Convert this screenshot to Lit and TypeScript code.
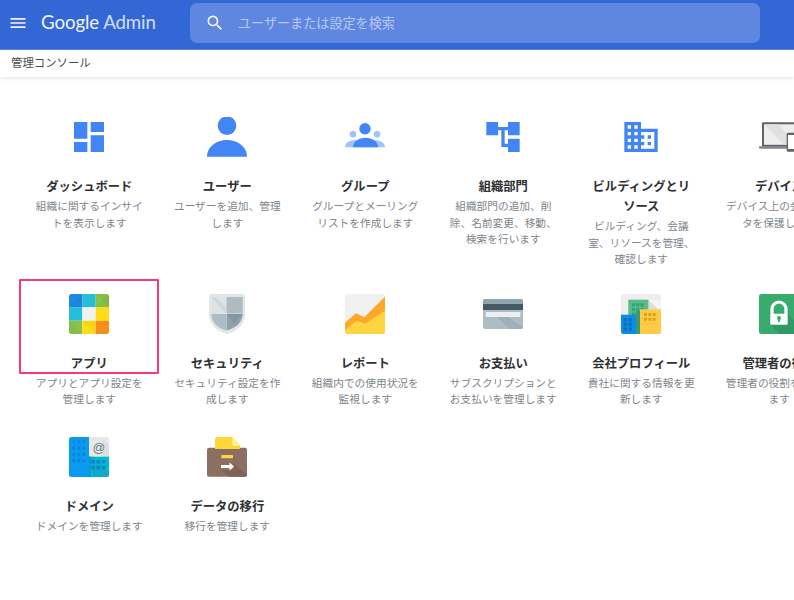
import { LitElement, html, css, svg } from "lit";
import { customElement } from "lit/decorators.js";

const ic = (body: unknown, vb = "0 0 40 40") =>
  html`<svg class="icon" viewBox=${vb} width="40" height="40">${body}</svg>`;
const B = "#4285f4";

const grid = (x: number, y: number, cols: number, rows: number, s: number, dx: number, dy: number, fill: string) => {
  const out: unknown[] = [];
  for (let r = 0; r < rows; r++)
    for (let c = 0; c < cols; c++)
      out.push(svg`<rect x=${x + c * dx} y=${y + r * dy} width=${s} height=${s} fill=${fill} />`);
  return out;
};

const icons = {
  dashboard: ic(svg`<path fill=${B} d="M3 13h8V3H3v10zm0 8h8v-6H3v6zm10 0h8V11h-8v10zm0-18v6h8V3h-8z"/>`, "0 0 24 24"),
  user: ic(svg`<circle cx="20" cy="8.7" r="9.3" fill=${B}/><path fill=${B} d="M0 39.7C0 29.5 10 23 20 23s20 6.500 20 16.700z"/>`),
  group: ic(svg`
    <circle cx="8" cy="17.300" r="3.300" fill="#a1c2fa"/><circle cx="32" cy="17.300" r="3.300" fill="#a1c2fa"/>
    <path fill="#a1c2fa" d="M0 30.300C0 26 5 23 10 23h20c5 0 10 3 10 7.300z"/>
    <circle cx="20" cy="11.700" r="5.700" fill=${B}/>
    <path fill=${B} d="M8 30.300C8 24.500 14 20.700 20.500 20.700S33 24.500 33 30.300z"/>`),
  org: ic(svg`<path fill=${B} d="M22 11V3h-7v3H9V3H2v8h7V8h2v10h4v3h7v-8h-7v3h-2V8h2v3z"/>`, "0 0 24 24"),
  building: ic(svg`<path fill=${B} d="M12 7V3H2v18h20V7H12zM6 19H4v-2h2v2zm0-4H4v-2h2v2zm0-4H4V9h2v2zm0-4H4V5h2v2zm4 12H8v-2h2v2zm0-4H8v-2h2v2zm0-4H8V9h2v2zm0-4H8V5h2v2zm10 12h-8v-2h2v-2h-2v-2h2v-2h-2V9h8v10zm-2-8h-2v2h2v-2zm0 4h-2v2h2v-2z"/>`, "0 0 24 24"),
  device: ic(svg`
    <rect x="3" y="5.300" width="34" height="24.500" rx="1" fill="#5f6368"/>
    <rect x="5" y="7.300" width="30" height="20.500" fill="#eeeeee"/>
    <path d="M5 7.300h14L35 24v3.800H25z" fill="#e0e0e0"/>
    <path d="M0 29.300h40v1.200a1.200 1.200 0 0 1-1.200 1.200H1.200A1.200 1.200 0 0 1 0 30.500z" fill="#80868b"/>
    <rect x="27.700" y="15.700" width="12.300" height="19" rx="1.500" fill="#5f6368"/>
    <rect x="29" y="18" width="10" height="14" fill="#ffffff"/>`),
  apps: ic(svg`
    <defs><clipPath id="ac"><rect width="40" height="40" rx="2.500"/></clipPath></defs>
    <g clip-path="url(#ac)">
      <rect x="0" y="0" width="13.400" height="13.400" fill="#1e88e5"/>
      <rect x="13.300" y="0" width="13.400" height="13.400" fill="#26bdd8"/>
      <rect x="26.700" y="0" width="13.300" height="13.400" fill="#8bc34a"/>
      <rect x="0" y="13.300" width="13.400" height="13.400" fill="#26bdd8"/>
      <rect x="13.300" y="13.300" width="13.400" height="13.400" fill="#f1f1f1"/>
      <rect x="26.700" y="13.300" width="13.300" height="13.400" fill="#fddd17"/>
      <rect x="0" y="26.700" width="13.400" height="13.300" fill="#8bc34a"/>
      <rect x="13.300" y="26.700" width="13.400" height="13.300" fill="#fddd17"/>
      <rect x="26.700" y="26.700" width="13.300" height="13.300" fill="#f58f17"/>
      <path d="M0 13.300 13.300 0v13.300zM26.700 13.300 40 0v13.300z" fill="#000" opacity=".03"/>
      <path d="M26.700 0 40 13.300V0zM0 26.700 13.300 40H0zM13.300 26.700 26.700 40V26.700z" fill="#000" opacity=".03"/>
    </g>`),
  shield: ic(svg`
    <path fill="#e3e6e7" d="M2 2.300Q2 0 4.300 0h31.400Q38 0 38 2.300V20c0 10.500-8 17.500-18 20C10 37.500 2 30.500 2 20z"/>
    <path fill="#dde3e6" d="M4.300 3H19v16.500H4.300z"/>
    <path fill="#c4cfd4" d="M4.300 3H8L19 14v5.500z" opacity=".6"/>
    <path fill="#adbcc3" d="M19.500 3h16.200v16.500H19.500z"/>
    <path fill="#aebcc3" d="M4.300 20H19v16.500C11 34 4.300 28.500 4.300 20z"/>
    <path fill="#8fa3ad" d="M19.500 20h16.200c0 8.500-7 14-16.200 16.500z"/>
    <path fill="#7b909b" d="M19.500 20h16.200L27 30z" opacity=".6"/>`),
  report: ic(svg`
    <defs><clipPath id="rc"><rect width="40" height="40" rx="2.500"/></clipPath></defs>
    <g clip-path="url(#rc)">
      <rect width="40" height="40" fill="#f1f1f1"/>
      <path fill="#fdd541" d="M0 36 12 26.700l8.300 3.300L40 17v23H0z"/>
      <path fill="#ffa726" d="M0 28.700 11 19.300l8.300 4L40 2.700V17L20.300 30 12 26.700 0 36z"/>
    </g>`),
  card: ic(svg`
    <rect y="5" width="40" height="30" rx="2" fill="#adbdc4"/>
    <path d="M14 23h11l15 10v.2a1.800 1.800 0 0 1-1.800 1.800H27z" fill="#9fb0b8"/>
    <path d="M0 7a2 2 0 0 1 2-2h36a2 2 0 0 1 2 2v3.500H0z" fill="#90a4ae"/>
    <rect y="10" width="40" height="6" fill="#455a64"/>
    <rect x="2.700" y="18" width="34.600" height="5" fill="#eceff1"/>`),
  company: ic(svg`
    <defs><clipPath id="cc"><rect width="40" height="40" rx="2.500"/></clipPath></defs>
    <g clip-path="url(#cc)">
      <rect width="40" height="40" fill="#eeeeee"/>
      <path d="M27 5.700 40 18V6H27z" fill="#f5f5f5"/>
      <path d="M27 5.700 40 18v-3H27z" fill="#dcdcdc"/>
      <rect x="7.300" y="5.700" width="20" height="34.300" fill="#57bb8a"/>
      ${grid(11, 9.5, 3, 3, 3, 4.300, 4.500, "#34a26f")}
      <rect x="15" y="17" width="4" height="23" fill="#3c9a70"/>
      <rect x="19" y="15.300" width="21" height="24.700" fill="#ffca45"/>
      ${grid(23, 19, 3, 2, 3, 4.300, 4.700, "#d9a414")}
      <rect x="0" y="20.700" width="15" height="19.300" fill="#0b8de6"/>
      ${grid(2.500, 24, 2, 3, 3.400, 5, 4.700, "#0a6fc0")}
    </g>`),
  lock: ic(svg`
    <defs><clipPath id="lc"><rect width="40" height="40" rx="2.500"/></clipPath></defs>
    <g clip-path="url(#lc)">
      <rect width="40" height="40" fill="#37ab6e"/>
      <path d="M11 30 28 19 50 42V50H30z" fill="#2f9a61"/>
      <path d="M13 20v-5a7 7 0 0 1 14 0v5" fill="none" stroke="#fff" stroke-width="3.200"/>
      <rect x="11.300" y="19.700" width="17.400" height="11" rx="1" fill="#fff"/>
      <circle cx="20" cy="24" r="2" fill="#37ab6e"/>
      <rect x="19" y="24" width="2" height="4" fill="#37ab6e"/>
    </g>`),
  domain: ic(svg`
    <defs><clipPath id="dc"><rect width="40" height="40" rx="2.500"/></clipPath></defs>
    <g clip-path="url(#dc)">
      <rect x="20" width="20" height="20" fill="#e8e8e8"/>
      <path d="M34 2 40 8v12h-8z" fill="#dedede"/>
      <rect x="20" y="19.700" width="20" height="20.300" fill="#00bcd4"/>
      <path d="M20 19.700h4L40 36v4H25z" fill="#12aacb"/>
      <rect width="20" height="40" fill="#0a9bf0"/>
      <rect x="20" y="19.700" width="1.500" height="20.300" fill="#0a7fb8" opacity=".6"/>
      ${grid(3.300, 3.300, 3, 4, 3, 5, 6.300, "#0a83dc")}
      ${grid(22.300, 23, 3, 2, 3.500, 5.300, 5.800, "#0a85c9")}
      <text class="at" x="29.800" y="14.500" text-anchor="middle">@</text>
    </g>`),
  migrate: ic(svg`
    <path d="M8 2a2 2 0 0 1 2-2h15.500L33 7.700V16H8z" fill="#fdd835"/>
    <path d="M25.500 0 33.500 8.700h-8z" fill="#fff59d"/>
    <path d="M0 13a2.300 2.300 0 0 1 2.300-2.300H8V12h25v-1.300h4.700A2.300 2.300 0 0 1 40 13v24.700a2 2 0 0 1-2 2H2a2 2 0 0 1-2-2z" fill="#8d6e63"/>
    <path d="M14 33h13l-1-7.300L40 38v-.3a2 2 0 0 1-2 2H22z" fill="#7f6257"/>
    <rect x="14.300" y="18" width="11.700" height="3.300" rx=".5" fill="#fdd835"/>
    <path d="M14 28h8.500v-2.500L27 29.500l-4.500 4V31H14z" fill="#fff"/>`),
};

interface Item {
  icon: unknown;
  title: string[];
  desc: string[];
  selected?: boolean;
}

const items: Item[] = [
  { icon: icons.dashboard, title: ["ダッシュボード"], desc: ["組織に関するインサイ", "トを表示します"] },
  { icon: icons.user, title: ["ユーザー"], desc: ["ユーザーを追加、管理", "します"] },
  { icon: icons.group, title: ["グループ"], desc: ["グループとメーリング", "リストを作成します"] },
  { icon: icons.org, title: ["組織部門"], desc: ["組織部門の追加、削", "除、名前変更、移動、", "検索を行います"] },
  { icon: icons.building, title: ["ビルディングとリ", "ソース"], desc: ["ビルディング、会議", "室、リソースを管理、", "確認します"] },
  { icon: icons.device, title: ["デバイス"], desc: ["デバイス上の会社デー", "タを保護します"] },
  { icon: icons.apps, title: ["アプリ"], desc: ["アプリとアプリ設定を", "管理します"], selected: true },
  { icon: icons.shield, title: ["セキュリティ"], desc: ["セキュリティ設定を作", "成します"] },
  { icon: icons.report, title: ["レポート"], desc: ["組織内での使用状況を", "監視します"] },
  { icon: icons.card, title: ["お支払い"], desc: ["サブスクリプションと", "お支払いを管理します"] },
  { icon: icons.company, title: ["会社プロフィール"], desc: ["貴社に関する情報を更", "新します"] },
  { icon: icons.lock, title: ["管理者の役割"], desc: ["管理者の役割を管理し", "ます"] },
  { icon: icons.domain, title: ["ドメイン"], desc: ["ドメインを管理します"] },
  { icon: icons.migrate, title: ["データの移行"], desc: ["移行を管理します"] },
];

@customElement("app-root")
export class AppRoot extends LitElement {
  static styles = css`
    :host {
      display: block;
      width: 794px;
      height: 600px;
      overflow: hidden;
      background: #fff;
      font-family: "Noto Sans CJK JP", "Noto Sans", sans-serif;
    }
    .topbar {
      height: 50px;
      box-sizing: border-box;
      background: #3367d6;
      display: flex;
      align-items: center;
      padding: 3px 34px 7px 7.5px;
      color: #fff;
      border-bottom: 1px solid #5c85de;
    }
    .menu,
    .search-icon {
      flex: none;
      width: 20px;
      height: 20px;
      fill: #fff;
      opacity: 0.92;
    }
    .logo {
      font-family: Lato, Roboto, sans-serif;
      font-size: 18.7px;
      line-height: 22px;
      margin-left: 13.5px;
      margin-top: -1px;
      width: 149px;
      flex: none;
      white-space: nowrap;
      opacity: 0.92;
      letter-spacing: -0.1px;
    }
    .logo span {
      opacity: 0.85;
    }
    .search {
      flex: 1;
      height: 40px;
      border-radius: 7px;
      background: #5f87e0;
      display: flex;
      align-items: center;
      gap: 13.5px;
      padding-left: 14.500px;
      font-size: 13.1px;
      color: #b6c9f1;
      white-space: nowrap;
    }
    .crumb {
      height: 27px;
      box-sizing: border-box;
      display: flex;
      align-items: center;
      padding: 0 0 3px 11px;
      font-size: 11.4px;
      color: #4a4d50;
      background: #fff;
      box-shadow: 0 1px 4px rgba(0, 0, 0, 0.13);
    }
    .grid {
      display: grid;
      grid-template-columns: repeat(6, 138px);
      grid-template-rows: 176.700px 143.300px 143px;
      padding: 26px 0 0 20.300px;
    }
    .card {
      position: relative;
      display: flex;
      flex-direction: column;
      align-items: center;
      padding-top: 14px;
      text-align: center;
      white-space: nowrap;
    }
    .card.selected::after {
      content: "";
      position: absolute;
      left: -1px;
      top: -0.5px;
      width: 139.500px;
      height: 95px;
      box-sizing: border-box;
      border: 2.600px solid #fb3a74;
      border-radius: 1px;
    }
    .icon {
      display: block;
      flex: none;
    }
    .at {
      font-family: "Liberation Sans", sans-serif;
      font-size: 12.5px;
      fill: #607d8b;
    }
    .title {
      margin-top: 19px;
      font-size: 12.3px;
      line-height: 20px;
      font-weight: 700;
      color: #303134;
    }
    .desc {
      margin-top: 2px;
      font-size: 10.7px;
      line-height: 16.700px;
      color: #80868b;
    }
    .line {
      display: block;
    }
  `;

  render() {
    return html`
      <header class="topbar">
        <svg class="menu" viewBox="0 0 24 24"><path d="M3 18h18v-2H3v2zm0-5h18v-2H3v2zm0-7v2h18V6H3z" /></svg>
        <div class="logo">Google <span>Admin</span></div>
        <div class="search">
          <svg class="search-icon" viewBox="0 0 24 24"><path d="M15.500 14h-.79l-.28-.27A6.470 6.470 0 0 0 16 9.500 6.500 6.500 0 1 0 9.500 16c1.610 0 3.090-.59 4.230-1.570l.27.28v.79l5 4.990L20.490 19l-4.990-5zm-6 0C7.010 14 5 11.990 5 9.500S7.010 5 9.500 5 14 7.010 14 9.500 11.990 14 9.500 14z" /></svg>
          <span>ユーザーまたは設定を検索</span>
        </div>
      </header>
      <nav class="crumb">管理コンソール</nav>
      <main class="grid">
        ${items.map(
          (it) => html`
            <section class="card ${it.selected ? "selected" : ""}">
              ${it.icon}
              <div class="title">${it.title.map((l) => html`<span class="line">${l}</span>`)}</div>
              <div class="desc">${it.desc.map((l) => html`<span class="line">${l}</span>`)}</div>
            </section>
          `
        )}
      </main>
    `;
  }
}
